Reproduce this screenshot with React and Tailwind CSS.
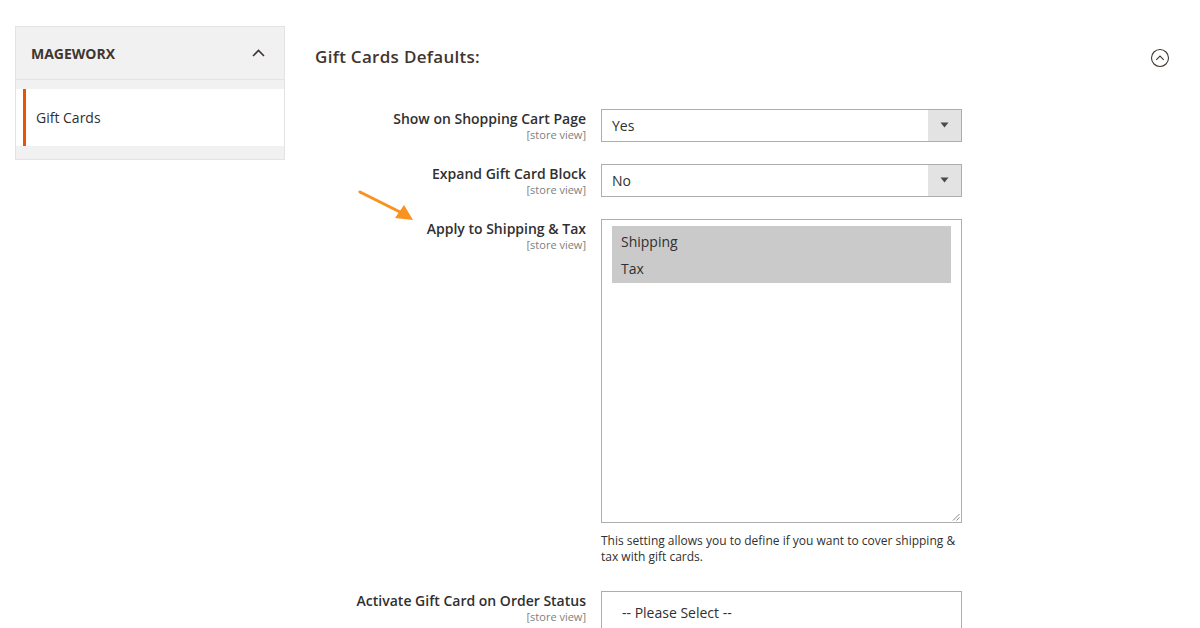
import React from "react";

const font = { fontFamily: '"Open Sans", "Noto Sans", Arial, sans-serif' };

const SelectBox = ({ value }) => (
  <div className="flex h-[33px] w-[361px] border border-[#adadad] bg-white">
    <div className="flex flex-1 items-center pl-[10px] text-[14px] text-[#303030]">{value}</div>
    <div className="flex w-[33px] items-center justify-center bg-[#e3e3e3]">
      <svg width="9" height="6" viewBox="0 0 9 6">
        <path d="M0.5 0.5 L8.5 0.5 L4.5 5.5 Z" fill="#514943" />
      </svg>
    </div>
  </div>
);

const Label = ({ title }) => (
  <div className="w-[271px] pt-[1px] text-right">
    <div className="text-[14px] font-semibold leading-[18px] text-[#303030]">{title}</div>
    <div className="text-[11px] leading-[13px] text-[#808080]">[store view]</div>
  </div>
);

const Row = ({ title, children, className = "" }) => (
  <div className={`flex gap-[15px] ${className}`}>
    <Label title={title} />
    <div>{children}</div>
  </div>
);

export default function App() {
  return (
    <div style={font} className="relative flex h-[628px] w-[1200px] overflow-hidden bg-white">
      {/* SIDEBAR */}
      <aside className="ml-[15px] mt-[26px] h-[134px] w-[270px] border border-[#e3e3e3] bg-[#f1f1f1]">
        <div className="flex h-[53px] items-center justify-between border-b border-[#e3e3e3] pl-[15px] pr-[19px]">
          <span className="text-[14px] font-bold text-[#41362f]">MAGEWORX</span>
          <svg width="13" height="8" viewBox="0 0 13 8">
            <path d="M1 7 L6.5 1.5 L12 7" fill="none" stroke="#41362f" strokeWidth="1.6" />
          </svg>
        </div>
        <div className="mt-[9px] flex h-[57px] bg-white">
          <div className="ml-[7px] w-[3px] bg-[#eb5202]" />
          <div className="flex items-center pl-[10px] text-[14px] text-[#303030]">Gift Cards</div>
        </div>
      </aside>

      {/* MAIN */}
      <main className="ml-[30px] flex-1 pr-[30px]">
        <div className="mt-[44px] flex items-center justify-between">
          <h1 className="text-[17px] font-semibold tracking-[0.3px] text-[#41362f]">Gift Cards Defaults:</h1>
          <svg width="20" height="20" viewBox="0 0 20 20" className="mt-[2px]">
            <circle cx="10" cy="10" r="8.5" fill="none" stroke="#41362f" strokeWidth="1.1" />
            <path d="M6.3 11.8 L10 8 L13.7 11.8" fill="none" stroke="#41362f" strokeWidth="1.1" />
          </svg>
        </div>

        <div className="mt-[39px] flex flex-col">
          <Row title="Show on Shopping Cart Page">
            <SelectBox value="Yes" />
          </Row>
          <Row title="Expand Gift Card Block" className="mt-[22px]">
            <SelectBox value="No" />
          </Row>
          <Row title="Apply to Shipping & Tax" className="mt-[22px]">
            <div className="relative h-[304px] w-[361px] border border-[#adadad] bg-white px-[10px] pt-[6px]">
              <div className="w-[339px] bg-[#cacaca]">
                <div className="flex h-[29px] items-center pl-[9px] pt-[2px] text-[14px] text-[#303030]">Shipping</div>
                <div className="flex h-[28px] items-center pl-[9px] text-[14px] text-[#303030]">Tax</div>
              </div>
              <svg width="8" height="8" viewBox="0 0 8 8" className="absolute bottom-[1px] right-[1px]">
                <path d="M7.5 1 L1 7.5 M7.5 4.5 L4.5 7.5" stroke="#777" strokeWidth="0.9" />
              </svg>
            </div>
            <p className="mt-[10px] w-[365px] text-[12px] leading-[16px] text-[#303030]">
              This setting allows you to define if you want to cover shipping &amp; tax with gift cards.
            </p>
          </Row>
          <Row title="Activate Gift Card on Order Status" className="mt-[26px]">
            <div className="h-[80px] w-[361px] border border-[#adadad] bg-white pt-[11px]">
              <div className="pl-[20px] text-[14px] leading-[19px] text-[#303030]">-- Please Select --</div>
            </div>
          </Row>
        </div>
      </main>

      {/* annotation arrow */}
      <svg width="70" height="40" viewBox="0 0 70 40" className="absolute left-[355px] top-[187px]">
        <path d="M5 5 L47 26" stroke="#f7931e" strokeWidth="3" strokeLinecap="round" />
        <path d="M58 33 L40 31 L49 18 Z" fill="#f7931e" />
      </svg>
    </div>
  );
}
